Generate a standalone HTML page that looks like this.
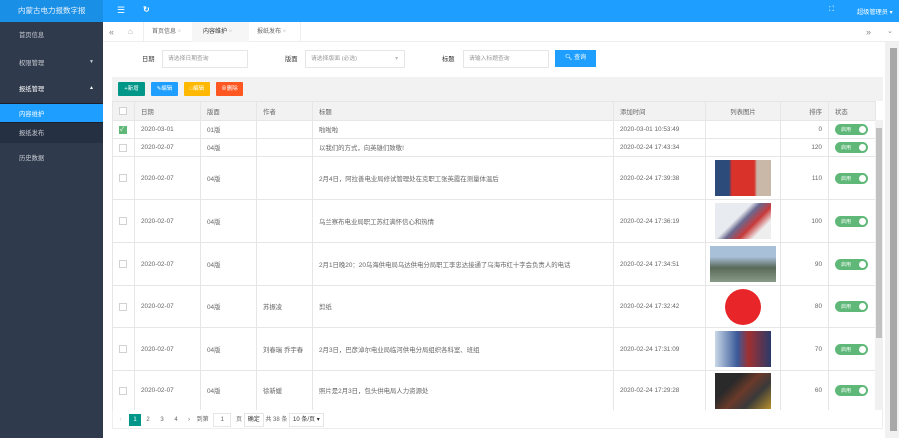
<!DOCTYPE html>
<html><head><meta charset="utf-8"><style>
*{margin:0;padding:0;box-sizing:border-box}
body{width:899px;height:438px;overflow:hidden;font-family:"Liberation Sans","Noto Sans CJK SC",sans-serif;font-size:6px;color:#666;background:#fff;position:relative}
.a{position:absolute}
.side{left:0;top:0;width:103px;height:438px;background:#2f3a4c}
.logo{left:0;top:0;width:103px;height:22px;background:#1a8fe6;color:#e8f3fc;font-size:7.5px;line-height:22px;padding-left:18px}
.top{left:103px;top:0;width:796px;height:22px;background:#1e9fff;color:#fff}
.mi{left:0;width:103px;color:#c8ccd3;font-size:6.3px;padding-left:19px}
.tabs{left:103px;top:22px;width:796px;height:20px;background:#fff;border-bottom:1px solid #eee}
.tab{top:0;height:20px;line-height:20px;font-size:6px;color:#666}
.inp{height:18px;border:1px solid #e6e6e6;font-size:5.8px;color:#999;line-height:16px;padding-left:5px}
.btn{top:82px;height:14px;color:#fff;font-size:5.5px;line-height:14px;text-align:center;border-radius:1px}
table{border-collapse:collapse;position:absolute;left:112px;top:101px;width:763px;table-layout:fixed}
td{border:1px solid #e6e6e6;font-size:6.4px;color:#666;padding-left:6px;white-space:nowrap;overflow:hidden;vertical-align:middle}
tr.h td{background:#f2f2f2;height:19px}
.cb{width:8px;height:8px;border:1px solid #d2d2d2;background:#fff;display:inline-block;vertical-align:middle}
.sw{display:inline-block;width:33px;height:11px;border-radius:6px;background:#5fb878;position:relative;vertical-align:middle}
.sw:before{content:"启用";color:#fff;font-size:5px;position:absolute;left:6px;top:2px}
.sw:after{content:"";position:absolute;right:2px;top:2px;width:7px;height:7px;border-radius:50%;background:#fff}
.img{display:inline-block;width:56px;height:36px;vertical-align:middle}
</style></head><body>
<div class="a side"></div>
<div class="a logo">内蒙古电力报数字报</div>
<div class="a mi" style="top:30px">首页信息</div>
<div class="a mi" style="top:58px">权限管理<span style="position:absolute;left:89px;top:1px;font-size:5px">▼</span></div>
<div class="a mi" style="top:84px;color:#fff">报纸管理<span style="position:absolute;left:89px;top:1px;font-size:5px">▲</span></div>
<div class="a" style="left:0;top:103px;width:103px;height:20px;background:#1e1f2b"></div>
<div class="a" style="left:0;top:104px;width:103px;height:18px;background:#1e9fff"></div>
<div class="a mi" style="top:109px;color:#fff;padding-left:19px">内容维护</div>
<div class="a" style="left:0;top:123px;width:103px;height:20px;background:#253042"></div>
<div class="a mi" style="top:128px">报纸发布</div>
<div class="a mi" style="top:153px">历史数据</div>

<div class="a top"><span class="a" style="left:14px;top:5px;font-size:9px">☰</span><span class="a" style="left:40px;top:5px;font-size:8px;font-weight:bold">↻</span><span class="a" style="left:726px;top:6px;font-size:7px">⛶</span><span class="a" style="left:754px;top:7px;font-size:6.2px">超级管理员 ▾</span></div>
<div class="a tabs">
<span class="tab a" style="left:6px;font-size:9px;color:#888">«</span>
<span class="tab a" style="left:25px;font-size:8px;color:#aaa">⌂</span>
<span class="tab a" style="left:40px;width:48px;padding-left:8px;border-left:1px solid #eee">首页信息 <span style="color:#ccc">×</span></span>
<span class="tab a" style="left:89px;width:57px;padding-left:11px;background:#f6f6f6;color:#333">内容维护 <span style="color:#ccc">×</span></span>
<span class="tab a" style="left:146px;width:52px;padding-left:8px;border-right:1px solid #eee">报纸发布 <span style="color:#ccc">×</span></span>
<span class="tab a" style="left:763px;font-size:9px;color:#888">»</span>
<span class="tab a" style="left:784px;font-size:7px;color:#888">⌄</span>
</div>

<span class="a" style="left:142px;top:54px;color:#333;font-size:6.3px">日期</span>
<div class="a inp" style="left:162px;top:50px;width:86px">请选择日期查询</div>
<span class="a" style="left:285px;top:54px;color:#333;font-size:6.3px">版面</span>
<div class="a inp" style="left:305px;top:50px;width:100px">请选择版面 (必选)<span style="position:absolute;right:6px;color:#bbb">▾</span></div>
<span class="a" style="left:442px;top:54px;color:#333;font-size:6.3px">标题</span>
<div class="a inp" style="left:463px;top:50px;width:86px">请输入标题查询</div>
<div class="a" style="left:555px;top:50px;width:41px;height:17px;background:#1e9fff;color:#fff;font-size:6px;line-height:17px;text-align:center">🔍︎ 查询</div>

<div class="a" style="left:112px;top:77px;width:771px;height:24px;background:#f2f2f2"></div>
<div class="a btn" style="left:118px;width:27px;background:#009688">+新增</div>
<div class="a btn" style="left:151px;width:27px;background:#1e9fff">✎编辑</div>
<div class="a btn" style="left:184px;width:26px;background:#ffb800">□编辑</div>
<div class="a btn" style="left:216px;width:27px;background:#ff5722">⊗删除</div>

<table>
<colgroup><col style="width:22px"><col style="width:66px"><col style="width:56px"><col style="width:56px"><col style="width:301px"><col style="width:92px"><col style="width:75px"><col style="width:48px"><col style="width:47px"></colgroup>
<tr class="h"><td><span class="cb"></span></td><td>日期</td><td>版面</td><td>作者</td><td>标题</td><td>添加时间</td><td style="text-align:center;padding:0">列表图片</td><td style="text-align:right;padding-right:6px">排序</td><td>状态</td></tr>
<tr style="height:18px"><td><span class="cb" style="background:#5fb878;border-color:#5fb878;color:#fff;font-size:6px;line-height:6px">✓</span></td><td>2020-03-01</td><td>01版</td><td></td><td>啦啦啦</td><td>2020-03-01 10:53:49</td><td></td><td style="text-align:right;padding-right:6px">0</td><td><span class="sw"></span></td></tr>
<tr style="height:18px"><td><span class="cb"></span></td><td>2020-02-07</td><td>04版</td><td></td><td>以我们的方式，向英雄们致敬!</td><td>2020-02-24 17:43:34</td><td></td><td style="text-align:right;padding-right:6px">120</td><td><span class="sw"></span></td></tr>
<tr style="height:43px"><td><span class="cb"></span></td><td>2020-02-07</td><td>04版</td><td></td><td>2月4日，阿拉善电业局修试管理处在克职工张英霞在测量体温后</td><td>2020-02-24 17:39:38</td><td style="text-align:center;padding:0"><span class="img" style="background:linear-gradient(90deg,#2c4a7a 25%,#d8322a 30%,#d8322a 70%,#c9b8a8 75%)"></span></td><td style="text-align:right;padding-right:6px">110</td><td><span class="sw"></span></td></tr>
<tr style="height:43px"><td><span class="cb"></span></td><td>2020-02-07</td><td>04版</td><td></td><td>乌兰察布电业局职工苏红满怀信心和热情</td><td>2020-02-24 17:36:19</td><td style="text-align:center;padding:0"><span class="img" style="background:linear-gradient(135deg,#e8ecf0 40%,#6a6890 50%,#c83a3a 65%,#eee 80%)"></span></td><td style="text-align:right;padding-right:6px">100</td><td><span class="sw"></span></td></tr>
<tr style="height:43px"><td><span class="cb"></span></td><td>2020-02-07</td><td>04版</td><td></td><td>2月1日晚20：20乌海供电局乌达供电分局职工李忠达接通了乌海市红十字会负责人的电话</td><td>2020-02-24 17:34:51</td><td style="text-align:center;padding:0"><span class="img" style="width:66px;background:linear-gradient(180deg,#a8c0d8 30%,#5a6a5a 60%,#8a9a88)"></span></td><td style="text-align:right;padding-right:6px">90</td><td><span class="sw"></span></td></tr>
<tr style="height:42px"><td><span class="cb"></span></td><td>2020-02-07</td><td>04版</td><td>苏振凌</td><td>剪纸</td><td>2020-02-24 17:32:42</td><td style="text-align:center;padding:0"><span class="img" style="width:36px;border-radius:50%;background:#e8262a"></span></td><td style="text-align:right;padding-right:6px">80</td><td><span class="sw"></span></td></tr>
<tr style="height:43px"><td><span class="cb"></span></td><td>2020-02-07</td><td>04版</td><td>刘春瑞 乔宇春</td><td>2月3日，巴彦淖尔电业局临河供电分局组织各科室、班组</td><td>2020-02-24 17:31:09</td><td style="text-align:center;padding:0"><span class="img" style="background:linear-gradient(90deg,#c9d8e8,#3a5a9a 40%,#a03030 60%,#2a3a6a)"></span></td><td style="text-align:right;padding-right:6px">70</td><td><span class="sw"></span></td></tr>
<tr style="height:40px"><td><span class="cb"></span></td><td>2020-02-07</td><td>04版</td><td>徐新媛</td><td>照片是2月3日，包头供电局人力资源处</td><td>2020-02-24 17:29:28</td><td style="text-align:center;padding:0"><span class="img" style="background:linear-gradient(135deg,#2a2a2a 30%,#6a3a2a 50%,#3a3a3a 70%,#b8902a)"></span></td><td style="text-align:right;padding-right:6px">60</td><td><span class="sw"></span></td></tr>
</table>
<div class="a" style="left:875px;top:120px;width:8px;height:290px;background:#f1f1f1"></div>
<div class="a" style="left:876px;top:128px;width:6px;height:210px;background:#c1c1c1"></div>
<div class="a" style="left:112px;top:410px;width:771px;height:19px;border:1px solid #eee;border-top:none;background:#fff"></div>
<div class="a" style="left:112px;top:413px;font-size:6px;color:#666;line-height:12px;white-space:nowrap">
<span style="display:inline-block;width:17px;text-align:center;color:#ccc">‹</span><span style="display:inline-block;width:12px;background:#009688;color:#fff;text-align:center">1</span><span style="display:inline-block;width:14px;text-align:center">2</span><span style="display:inline-block;width:14px;text-align:center">3</span><span style="display:inline-block;width:14px;text-align:center">4</span><span style="display:inline-block;width:12px;text-align:center">›</span> 到第 <span style="display:inline-block;width:18px;border:1px solid #e6e6e6;text-align:center;margin:0 3px">1</span> 页 <span style="display:inline-block;border:1px solid #e6e6e6;padding:0 3px;color:#333">确定</span> 共 38 条 <span style="display:inline-block;border:1px solid #e6e6e6;padding:0 3px;color:#333">10 条/页 ▾</span>
</div>
<div class="a" style="left:885px;top:42px;width:14px;height:396px;background:#f1f1f1"></div>
<div class="a" style="left:890px;top:48px;width:7px;height:383px;background:#a8a8a8"></div>
</body></html>
